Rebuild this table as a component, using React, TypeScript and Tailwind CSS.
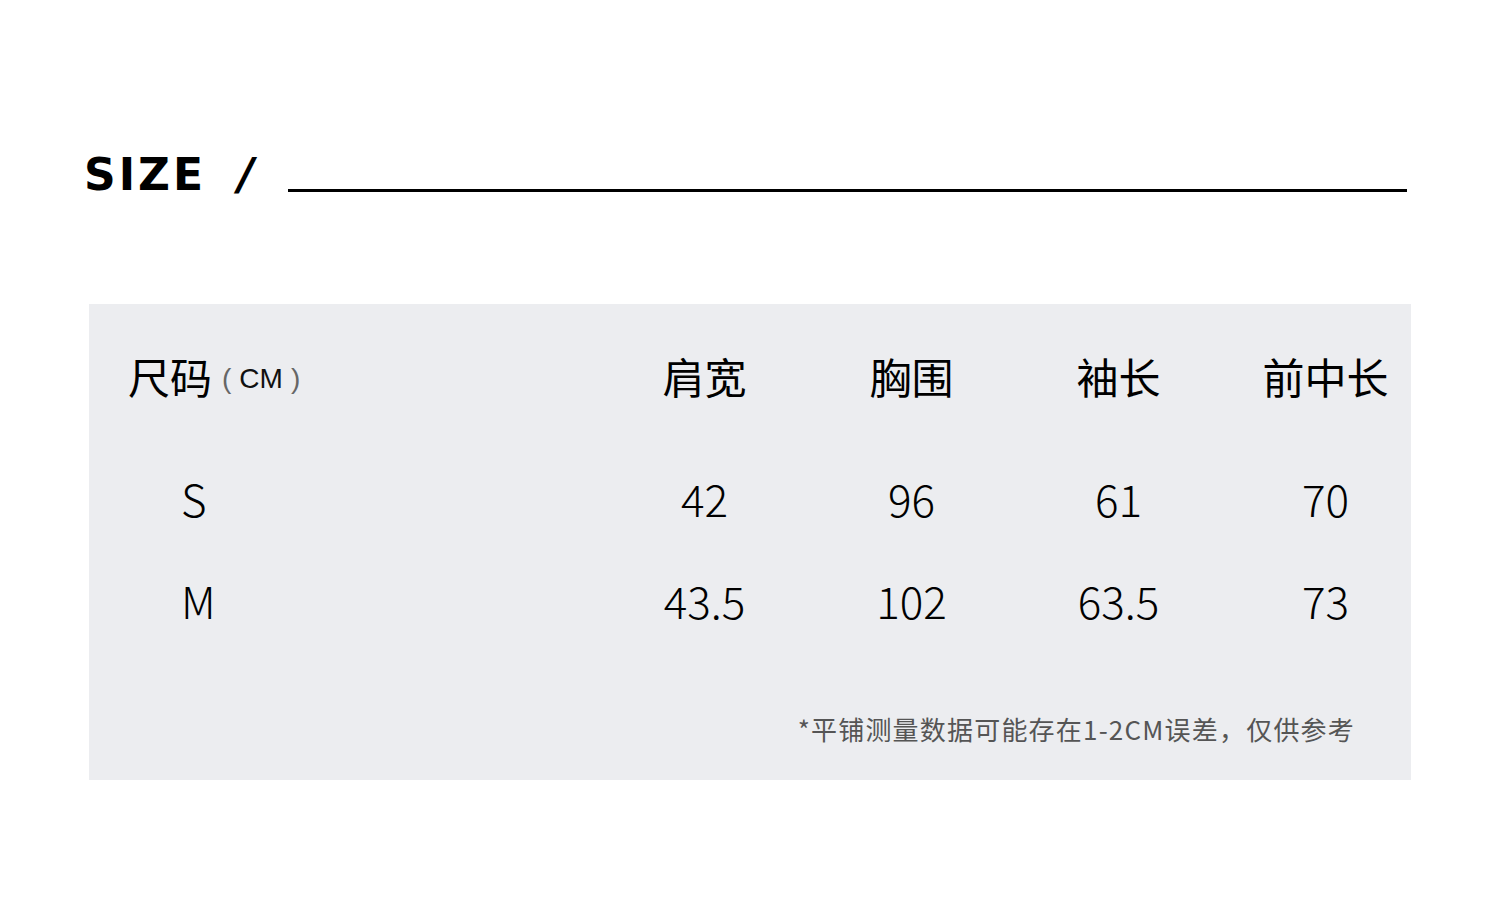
const cols = [
  { label: "肩宽", s: "42", m: "43.5" },
  { label: "胸围", s: "96", m: "102" },
  { label: "袖长", s: "61", m: "63.5" },
  { label: "前中长", s: "70", m: "73" },
];

const cjk = "font-['Noto_Sans_CJK_SC',sans-serif]";

export default function App() {
  return (
    <div className="w-[1500px] h-[914px] bg-white text-black">
      {/* title */}
      <div className="flex items-end pl-[84px] pr-[93px] pt-[153px]">
        <span className="font-['DejaVu_Sans',sans-serif] font-bold text-[44px] leading-[44px] tracking-[3px]">
          SIZE
        </span>
        <span className="ml-[32px] font-['DejaVu_Sans',sans-serif] font-bold text-[44px] leading-[44px] italic">
          /
        </span>
        <div className="ml-[34px] mb-[5px] flex-1 h-[3px] bg-black" />
      </div>

      {/* table */}
      <div className={`mx-[89px] mt-[107px] h-[476px] bg-[#ecedf0] pt-[44px] ${cjk}`}>
        <div className="grid grid-cols-[512px_207px_207px_207px_207px] h-14 items-center">
          <div className="pl-[39px] flex items-center">
            <span className="text-[42px] leading-none">尺码</span>
            <span className="ml-[10px] mt-[6px] text-[28px] font-['Liberation_Sans',sans-serif] text-[#666]">
              (
              <span className="mx-[8px] text-[#111]">CM</span>
              )
            </span>
          </div>
          {cols.map((c) => (
            <div key={c.label} className="text-center text-[42px] leading-none">
              {c.label}
            </div>
          ))}
        </div>

        <div className="mt-[66px] grid grid-cols-[512px_207px_207px_207px_207px] h-14 items-center font-light text-[44px] leading-none">
          <div className="pl-[92px]">S</div>
          {cols.map((c) => (
            <div key={c.label} className="text-center">
              {c.s}
            </div>
          ))}
        </div>

        <div className="mt-[46px] grid grid-cols-[512px_207px_207px_207px_207px] h-14 items-center font-light text-[44px] leading-none">
          <div className="pl-[92px]">M</div>
          {cols.map((c) => (
            <div key={c.label} className="text-center">
              {c.m}
            </div>
          ))}
        </div>

        <div className="mt-[84px] pr-[56px] text-right text-[26px] leading-[34px] text-[#555] tracking-[1.2px]">
          *平铺测量数据可能存在1-2CM误差，仅供参考
        </div>
      </div>
    </div>
  );
}
